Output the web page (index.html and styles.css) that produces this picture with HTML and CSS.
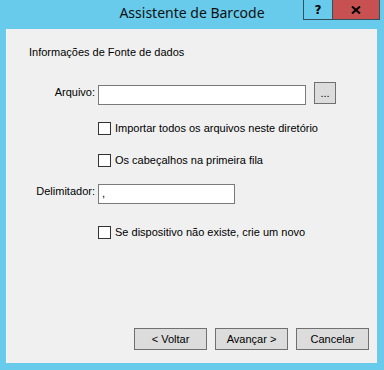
FILE: index.html
```html
<!DOCTYPE html>
<html>
<head>
  <title>Assistente de Barcode</title>
  <link rel="stylesheet" href="styles.css">
</head>
<body>
  <div class="window">
    <div class="titlebar">
      <span></span>
      <span class="title">Assistente de Barcode</span>
      <div class="caption">
        <div class="cap-btn help">?</div>
        <div class="cap-btn close">
          <svg width="10" height="8" viewBox="0 0 10 8">
            <path d="M1 0.5 L9 7.5 M9 0.5 L1 7.5" stroke="#000" stroke-width="2" fill="none"/>
          </svg>
        </div>
      </div>
    </div>

    <div class="client">
      <div class="heading">Informações de Fonte de dados</div>

      <div class="row file-row">
        <label class="label">Arquivo:</label>
        <div class="textbox wide"></div>
        <button class="browse">...</button>
      </div>

      <div class="check-row first">
        <span class="box"></span>
        <span>Importar todos os arquivos neste diretório</span>
      </div>

      <div class="check-row second">
        <span class="box"></span>
        <span>Os cabeçalhos na primeira fila</span>
      </div>

      <div class="row delim-row">
        <label class="label">Delimitador:</label>
        <div class="textbox short">,</div>
      </div>

      <div class="check-row third">
        <span class="box"></span>
        <span>Se dispositivo não existe, crie um novo</span>
      </div>

      <div class="footer">
        <button class="btn">&lt; Voltar</button>
        <button class="btn">Avançar &gt;</button>
        <button class="btn">Cancelar</button>
      </div>
    </div>
  </div>
</body>
</html>
```

FILE: styles.css
```css
body {
  margin: 0;
  background: #68cbeb;
  font-family: "Liberation Sans", Arial, sans-serif;
  font-size: 11px;
  color: #000;
}
.window {
  width: 384px;
  height: 370px;
  display: flex;
  flex-direction: column;
  background: #68cbeb;
}
.titlebar {
  height: 29px;
  display: grid;
  grid-template-columns: 1fr auto 1fr;
}
.title {
  font-family: "Noto Sans", "Open Sans", sans-serif;
  font-size: 14px;
  line-height: 18px;
  padding-top: 4px;
  color: #111;
}
.caption {
  justify-self: end;
  display: flex;
  margin-right: 4px;
  height: 20px;
}
.cap-btn {
  height: 19px;
  border: 1px solid #33505f;
  border-top: none;
  display: flex;
  align-items: center;
  justify-content: center;
}
.help {
  width: 28px;
  border-right: none;
  font-family: "DejaVu Sans", sans-serif;
  font-weight: bold;
  font-size: 12px;
}
.close {
  width: 46px;
  background: #c75050;
}
.client {
  flex: 1;
  margin: 0 7px 7px 6px;
  background: #f0f0f0;
  display: flex;
  flex-direction: column;
  border-left: 1px solid #fbfbfb;
}
.heading {
  margin-top: 17px;
  padding-left: 22px;
  line-height: 13px;
}
.row {
  display: flex;
  align-items: flex-start;
}
.label {
  width: 88px;
  margin-right: 3px;
  text-align: right;
  line-height: 13px;
}
.textbox {
  height: 18px;
  background: #fff;
  border: 1px solid #7a7a7a;
  padding-left: 3px;
  line-height: 16px;
  box-sizing: content-box;
}
.file-row {
  margin-top: 23px;
}
.file-row .label {
  margin-top: 4px;
}
.file-row .textbox {
  margin-top: 3px;
}
.wide {
  width: 203px;
}
.short {
  width: 132px;
}
.browse {
  width: 22px;
  height: 22px;
  margin-left: 8px;
  padding: 0;
  background: #dcdcdc;
  border: 1px solid #707070;
  font-family: "Liberation Sans", Arial, sans-serif;
  font-size: 11px;
  line-height: 12px;
}
.check-row {
  display: flex;
  align-items: center;
  padding-left: 91px;
  line-height: 13px;
}
.box {
  width: 11px;
  height: 11px;
  border: 1px solid #333;
  background: #fff;
  margin-right: 4px;
}
.first {
  margin-top: 17px;
}
.second {
  margin-top: 19px;
}
.delim-row {
  margin-top: 17px;
}
.delim-row .label {
  margin-top: 1px;
}
.third {
  margin-top: 22px;
}
.footer {
  margin-top: auto;
  padding-bottom: 13px;
  padding-right: 8px;
  display: flex;
  justify-content: flex-end;
  gap: 8px;
}
.btn {
  width: 73px;
  height: 22px;
  padding: 0;
  background: #dcdcdc;
  border: 1px solid #707070;
  font-family: "Liberation Sans", Arial, sans-serif;
  font-size: 11px;
  color: #000;
}
```
